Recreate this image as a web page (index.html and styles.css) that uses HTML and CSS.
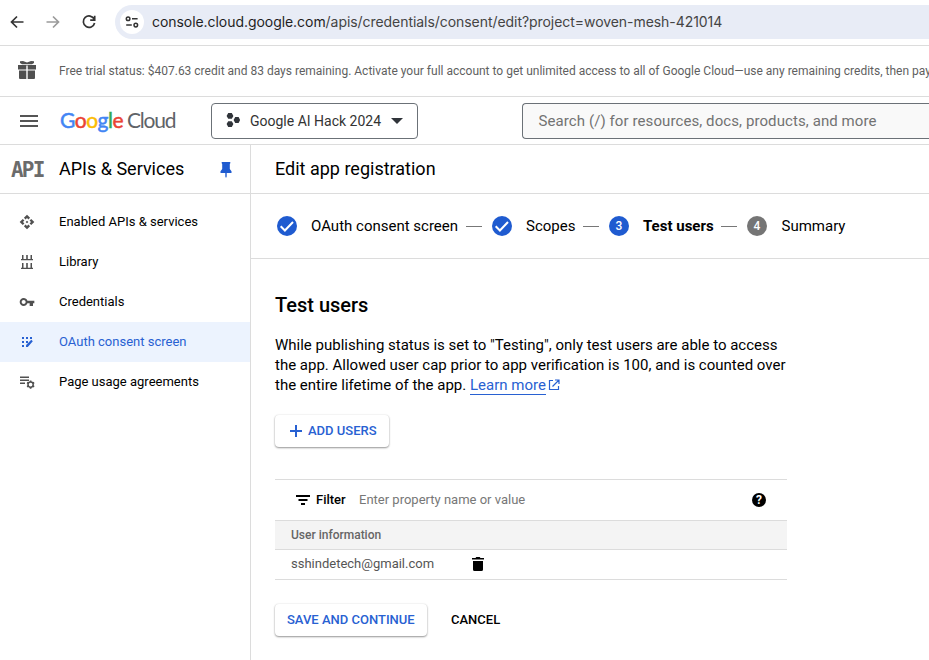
FILE: index.html
```html
<!DOCTYPE html>
<html lang="en">
<head>
<meta charset="utf-8">
<title>Edit app registration</title>
<link rel="stylesheet" href="styles.css">
</head>
<body>
<div class="browser">
  <svg class="nav back" viewBox="0 0 16 16"><path d="M14.5 8H3M8 2.5 2.5 8 8 13.5"/></svg>
  <svg class="nav forward" viewBox="0 0 16 16"><path d="M1.5 8H13M8 2.5 13.5 8 8 13.5"/></svg>
  <svg class="nav reload" viewBox="0 0 16 16"><path d="M13.2 5.2A5.7 5.7 0 1 0 13.6 9M13.7 1.8v4.3H9.2"/></svg>
  <div class="address">
    <span class="site"><svg viewBox="0 0 14 12"><circle cx="3.1" cy="2.7" r="1.8"/><path d="M7 2.7h5.6M1.2 9.1h5.6"/><circle cx="10.8" cy="9.1" r="1.8"/></svg></span>
    <span class="url"><span class="host">console.cloud.google.com</span>/apis/credentials/consent/edit?project=woven-mesh-421014</span>
  </div>
</div>
<div class="trial">
  <svg class="gift" viewBox="0 0 18 18"><path d="M0 4h18v4.500H9.700V4.500H8.300v4H0zM1 9.500h7.300V18H2a1 1 0 0 1-1-1zM9.700 9.500H17V17a1 1 0 0 1-1 1H9.700zM2 .3 5 0l4 1.400L13 0l3 .3V2l-2 1.200H4L2 2z"/></svg>
  <span class="trial-text">Free trial status: $407.63 credit and 83 days remaining. Activate your full account to get unlimited access to all of Google Cloud—use any remaining credits, then pay</span>
</div>
<header class="top">
  <span class="menu"></span>
  <span class="logo"><span class="google"><b class="bl">G</b><b class="rd">o</b><b class="ye">o</b><b class="bl">g</b><b class="gr">l</b><b class="rd">e</b></span><span class="cloud">Cloud</span></span>
  <button class="project"><svg class="hexes" viewBox="0 0 14 16"><path d="M2.200 1h3.600l1.600 2.900-1.600 2.900H2.200L.6 3.900zM9.200 5.100h3.400l1.500 2.900-1.500 2.900H9.200L7.600 8zM2.200 9.200h3.600l1.600 2.900L5.800 15H2.200L.6 12.100z"/></svg><span class="project-name">Google AI Hack 2024</span><svg class="caret" viewBox="0 0 12 6"><path d="M0 0h12L6 6z"/></svg></button>
  <div class="search"><span>Search (/) for resources, docs, products, and more</span></div>
</header>
<div class="body">
  <aside class="side">
    <div class="side-title"><span class="api">API</span><span class="side-name">APIs &amp; Services</span>
      <svg class="pin" viewBox="0 0 12 16"><path d="M1.700 0h8.600v1.300l-.5.700v5l1.700 2.300V11H6.700v3.500L6 16l-.7-1.500V11H.5V9.300L2.200 7V2l-.5-.7z"/></svg></div>
    <nav>
      <a class="item"><svg viewBox="0 0 24 24"><path d="m14 12-2 2-2-2 2-2 2 2zm-2-6 2.120 2.120 2.500-2.500L12 1 7.380 5.620l2.500 2.500L12 6zm-6 6 2.120-2.120-2.500-2.500L1 12l4.620 4.620 2.500-2.500L6 12zm12 0-2.120 2.120 2.500 2.500L23 12l-4.620-4.620-2.500 2.500L18 12zm-6 6-2.120-2.120-2.500 2.500L12 23l4.620-4.620-2.500-2.500L12 18z"/></svg><span>Enabled APIs &amp; services</span></a>
      <a class="item"><svg viewBox="0 0 16 16"><path d="M2 6V5h1V1h1.500v4h2.700V1h1.600v4h2.700V1H13v4h1v1.200H2zM2 15v-1.200h1V9h1.500v4.800h2.700V9h1.600v4.800h2.700V9H13v4.800h1V15z"/></svg><span>Library</span></a>
      <a class="item"><svg viewBox="0 0 24 24"><path d="M22 10H12.650C11.830 7.670 9.610 6 7 6c-3.310 0-6 2.690-6 6s2.690 6 6 6c2.610 0 4.830-1.670 5.650-4H16v4h5v-4h2v-4zM7 15c-1.650 0-3-1.350-3-3s1.350-3 3-3 3 1.350 3 3-1.350 3-3 3z"/></svg><span>Credentials</span></a>
      <a class="item active"><svg viewBox="0 0 16 16"><path d="M3 3h2v2H3zm4 0h2v2H7zm4 0h2v2h-2zM3 7h2v2H3zm4 0h2v2H7zm-4 4h2v2H3zm4 2 .1-2 5.200-5.200 1.500 1.500L8.800 13z"/></svg><span>OAuth consent screen</span></a>
      <a class="item"><svg viewBox="0 0 16 16"><path d="M1 2.500h9V4H1zm0 3h9V7H1zm0 3h5V10H1z"/><circle class="gear" cx="11.600" cy="10.600" r="2.600"/><path class="teeth" d="M11.600 6.500v1.400M11.600 13.300v1.400M8.050 8.550l1.200.7M13.950 11.950l1.200.7M8.050 12.650l1.200-.7M13.950 9.250l1.200-.7"/></svg><span>Page usage agreements</span></a>
    </nav>
  </aside>
  <main>
    <h1>Edit app registration</h1>
    <div class="steps">
      <span class="dot done"><svg viewBox="0 0 20 20"><path d="m3.700 10.300 4.200 4.200L16 6"/></svg></span><span class="label l1">OAuth consent screen</span><i></i>
      <span class="dot done"><svg viewBox="0 0 20 20"><path d="m3.700 10.300 4.200 4.200L16 6"/></svg></span><span class="label l2">Scopes</span><i></i>
      <span class="dot">3</span><span class="label l3">Test users</span><i></i>
      <span class="dot todo">4</span><span class="label l4">Summary</span>
    </div>
    <section class="content">
      <h2>Test users</h2>
      <p>While publishing status is set to "Testing", only test users are able to access<br>the app. Allowed user cap prior to app verification is 100, and is counted over<br>the entire lifetime of the app. <a class="learn">Learn more</a><svg class="ext" viewBox="0 0 12 12"><path d="M5 1.500H1.500v9h9V7M7 1h4v4M11 1 4.500 7.500"/></svg></p>
      <button class="btn add"><svg viewBox="0 0 12 12"><path d="M6 0v12M0 6h12"/></svg><span>ADD USERS</span></button>
      <div class="table">
        <div class="filter"><svg class="funnel" viewBox="0 0 14 10"><path d="M0 1h14M2.500 5h9M5 9h4"/></svg><b>Filter</b><span class="ph">Enter property name or value</span><span class="help">?</span></div>
        <div class="thead"><span>User information</span></div>
        <div class="row"><span class="email">sshindetech@gmail.com</span><svg class="trash" viewBox="0 0 12 14"><path d="M0 1h3.500l.8-1h3.400l.8 1H12v1.500H0zM1 4h10v8.500a1.500 1.500 0 0 1-1.500 1.500h-7A1.500 1.500 0 0 1 1 12.500z"/></svg></div>
      </div>
      <div class="actions"><button class="btn save"><span>SAVE AND CONTINUE</span></button><button class="cancel"><span>CANCEL</span></button></div>
    </section>
  </main>
</div>
</body>
</html>
```

FILE: styles.css
```css
* { box-sizing: border-box; }
body { margin: 0; width: 929px; height: 660px; overflow: hidden; background: #fff; color: #000; font-family: Roboto, sans-serif; font-size: 13px; display: flex; flex-direction: column; }
span, b, button, a { white-space: nowrap; }
svg { flex: none; display: block; }
button { font-family: inherit; margin: 0; padding: 0; background: #fff; border: 0; display: flex; align-items: center; }

.browser { height: 46px; flex: none; border-bottom: 1px solid #dcdcdc; display: flex; align-items: center; padding: 0 0 1px 9px; }
.nav { width: 16px; height: 16px; margin-right: 20px; fill: none; stroke: #333; stroke-width: 1.7; }
.forward { stroke: #9b9b9b; }
.reload { margin-right: 18px; }
.address { flex: 1; height: 34px; border-radius: 17px 0 0 17px; background: #e8ecf6; display: flex; align-items: center; padding-left: 5px; }
.site { width: 24px; height: 24px; flex: none; border-radius: 50%; background: #fff; display: flex; align-items: center; justify-content: center; }
.site svg { width: 14px; height: 12px; fill: none; stroke: #333; stroke-width: 1.5; }
.url { margin-left: 8px; padding-bottom: 1px; font-family: Inter, sans-serif; font-size: 14px; color: #444; letter-spacing: -.055px; }
.host { color: #1f1f1f; }

.trial { height: 51px; flex: none; border-bottom: 1px solid #dcdcdc; display: flex; align-items: center; padding-left: 18px; overflow: hidden; }
.gift { width: 18px; height: 18px; fill: #505050; margin: 0 23px 2px 0; }
.trial-text { font-size: 12px; color: #5f5f5f; letter-spacing: 0; }

.top { height: 48px; flex: none; border-bottom: 1px solid #dcdcdc; display: flex; align-items: center; padding-left: 20px; }
.menu { width: 18px; height: 12px; border-top: 2px solid #555; border-bottom: 2px solid #555; background: linear-gradient(#555, #555) center / 100% 2px no-repeat; }
.logo { margin-left: 22px; width: 151px; padding-bottom: 2px; font-family: Lato, sans-serif; font-size: 21px; line-height: 24px; display: flex; }
.google { width: 67px; letter-spacing: -.5px; }
.google b { font-weight: 400; -webkit-text-stroke: .5px currentColor; }
.bl { color: #4285f4; }
.rd { color: #ea4335; }
.ye { color: #fbbc04; }
.gr { color: #34a853; }
.cloud { color: #5f6368; letter-spacing: -1.200px; }
.project { width: 207px; height: 36px; border: 1px solid #6b7177; border-radius: 4px; padding-left: 14px; color: #333; }
.hexes { width: 14px; height: 16px; fill: #30343a; margin-bottom: 2px; }
.project-name { margin-left: 10px; width: 141px; font-size: 14px; text-align: left; }
.caret { width: 12px; height: 6px; fill: #30343a; }
.search { margin-left: 104px; flex: 1; height: 36px; background: #f9f9f9; border: 1px solid #6b7177; border-right: 0; border-radius: 4px 0 0 4px; display: flex; align-items: center; padding-left: 15.500px; color: #727272; font-size: 15px; letter-spacing: .09px; }

.body { flex: 1; display: flex; }
.side { width: 251px; border-right: 1px solid #dcdcdc; flex: none; }
.side-title { height: 49px; border-bottom: 1px solid #dcdcdc; display: flex; align-items: center; padding-left: 11px; }
.api { width: 48px; padding-top: 1px; color: #6b6b6b; font: bold 21px/24px "DejaVu Sans Mono", monospace; letter-spacing: -1.800px; }
.side-name { width: 161px; padding-bottom: 2px; font-size: 18px; }
.pin { width: 12px; height: 16px; fill: #1f5bd0; margin-top: 1px; }
nav { padding-top: 8px; }
.item { height: 40px; display: flex; align-items: center; padding-left: 19px; }
.item span, .btn span, .cancel span, .ph, .email { padding-bottom: 2px; }
.item svg { width: 16px; height: 16px; fill: #505050; margin-right: 24px; }
.item.active { background: #ecf3fe; color: #2861d2; }
.item.active svg { fill: #2861d2; }
.item .gear { fill: none; stroke: #505050; stroke-width: 1.500; }
.teeth { stroke: #505050; stroke-width: 1.700; }

main { flex: 1; min-width: 0; }
h1 { height: 49px; margin: 0; padding-left: 24px; border-bottom: 1px solid #dcdcdc; font-size: 18px; line-height: 48px; font-weight: 400; }
.steps { height: 65px; border-bottom: 1px solid #dcdcdc; padding-left: 26px; display: flex; align-items: center; font-size: 15px; }
.dot { width: 20px; height: 20px; flex: none; border-radius: 50%; background: #1f5bd0; color: #fff; font-size: 12px; font-weight: 500; display: flex; align-items: center; justify-content: center; margin-right: 14px; }
.todo { background: #757575; }
.dot svg { width: 20px; height: 20px; fill: none; stroke: #fff; stroke-width: 2; }
.steps i { width: 16px; height: 1px; background: #777; margin: 0 10px 0 8px; flex: none; }
.l1 { width: 147px; }
.l2 { width: 49px; }
.l3 { width: 70px; font-weight: 700; }
.l4 { width: 64px; padding-left: .5px; }
.content { padding: 33px 24px 0; }
h2 { margin: 0; font-size: 20px; line-height: 26px; font-weight: 500; }
p { margin: 17px 0 0; font-size: 15px; line-height: 20px; white-space: nowrap; }
.learn { color: #2861d2; border-bottom: 1px solid #2861d2; }
.ext { display: inline-block; width: 12px; height: 12px; margin-left: 2px; vertical-align: -1px; fill: none; stroke: #2861d2; stroke-width: 1.200; }
.btn { height: 32px; border-radius: 4px; box-shadow: 0 1px 2px rgba(0,0,0,.4), 0 0 2px rgba(0,0,0,.1); color: #2861d2; font-size: 13px; font-weight: 500; }
.add { width: 114px; margin-top: 20px; padding-left: 15px; }
.add svg { width: 12px; height: 12px; stroke: #2861d2; stroke-width: 2; margin-right: 6px; }
.table { width: 512px; margin-top: 32px; border-top: 1px solid #dcdcdc; }
.filter { height: 40px; display: flex; align-items: center; padding-left: 21px; }
.funnel { width: 14px; height: 10px; stroke: #000; stroke-width: 2; }
.filter b { margin-left: 6px; width: 43px; padding-bottom: 2px; font-weight: 500; }
.ph { color: #777; flex: 1; }
.help { width: 14px; height: 14px; border-radius: 50%; background: #000; color: #fff; font-size: 12px; font-weight: 700; line-height: 14px; text-align: center; margin-right: 21px; }
.thead { height: 30px; border: solid #dcdcdc; border-width: 1px 0; background: #f4f4f4; display: flex; align-items: center; padding-left: 16px; font-size: 12px; font-weight: 500; color: #666; }
.row { height: 30px; border-bottom: 1px solid #dcdcdc; display: flex; align-items: center; padding-left: 16px; color: #555; }
.email { width: 181px; }
.trash { width: 12px; height: 14px; margin-bottom: 1px; }
.actions { display: flex; margin-top: 24px; }
.save { width: 152px; padding-left: 12px; }
.cancel { height: 32px; margin-left: 24px; font-size: 13px; font-weight: 500; color: #000; }
```
